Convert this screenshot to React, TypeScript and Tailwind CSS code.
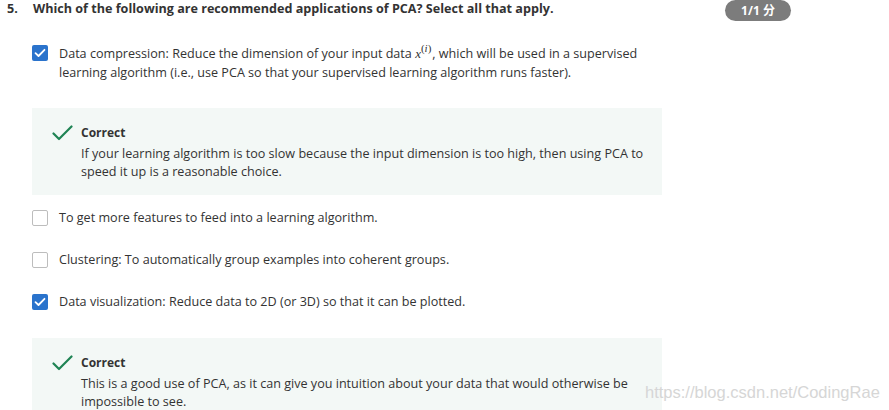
import React from "react";

const Checked = () => (
  <div className="w-[16px] h-[16px] rounded-[2px] bg-[#2a73cc] flex items-center justify-center shrink-0">
    <svg width="12" height="10" viewBox="0 0 12 10" fill="none">
      <path d="M1.5 5.2 L4.5 8 L10.5 1.8" stroke="white" strokeWidth="1.8" strokeLinecap="round" strokeLinejoin="round" />
    </svg>
  </div>
);

const Unchecked = () => (
  <div className="w-[16px] h-[16px] rounded-[2px] border border-[#bdbdbd] bg-white shrink-0" />
);

const Feedback = ({ children }: { children: React.ReactNode }) => (
  <div className="bg-[#f3f8f6] w-[630px] pl-[20px] pt-[16px] pb-[15px] flex">
    <svg width="21" height="16" viewBox="0 0 21 16" fill="none" className="mt-[1px] shrink-0">
      <path d="M1.5 8.5 L7 14 L19.5 1.5" stroke="#1f8354" strokeWidth="2.2" strokeLinecap="round" strokeLinejoin="round" />
    </svg>
    <div className="ml-[8px]">
      <div className="font-bold text-[12px] leading-[18px] text-[#333]">Correct</div>
      <div className="text-[12.6px] leading-[17.5px] text-[#333] mt-[3px] whitespace-nowrap">{children}</div>
    </div>
  </div>
);

export default function App() {
  return (
    <div
      className="relative w-[889px] h-[410px] bg-white overflow-hidden text-[#333]"
      style={{ fontFamily: '"Open Sans", "Noto Sans CJK SC", sans-serif' }}
    >
      <div className="flex items-start">
        <div className="flex items-center pl-[7px] pt-[0px] h-[19px] font-bold text-[12.6px]">
          <span className="w-[26px]">5.</span>
          <span>Which of the following are recommended applications of PCA? Select all that apply.</span>
        </div>
        <div className="ml-auto mr-[98px] mt-[0px] h-[21px] w-[66px] rounded-full bg-[#7c7c7c] text-white font-bold text-[12px] flex items-center justify-center">
          1/1 分
        </div>
      </div>

      <div className="pl-[32px] mt-[24px]">
        <div className="flex">
          <Checked />
          <div className="ml-[11px] text-[12.6px] leading-[19px] -mt-[1px] w-[600px]">
            Data compression: Reduce the dimension of your input data{" "}
            <span style={{ fontFamily: '"Liberation Serif", serif' }} className="italic text-[13px]">x</span>
            <span
              className="relative -top-[6px] text-[11px] leading-[0] mr-[1px]"
              style={{ fontFamily: '"Liberation Serif", serif' }}
            >
              (<i>i</i>)
            </span>
            , which will be used in a supervised learning algorithm (i.e., use PCA so that your supervised learning algorithm runs faster).
          </div>
        </div>

        <div className="mt-[26px]">
          <Feedback>
            If your learning algorithm is too slow because the input dimension is too high, then using PCA to
            <br />
            speed it up is a reasonable choice.
          </Feedback>
        </div>

        <div className="flex items-center mt-[15px] h-[16px]">
          <Unchecked />
          <span className="ml-[11px] text-[12.6px]">To get more features to feed into a learning algorithm.</span>
        </div>
        <div className="flex items-center mt-[26px] h-[16px]">
          <Unchecked />
          <span className="ml-[11px] text-[12.6px]">Clustering: To automatically group examples into coherent groups.</span>
        </div>
        <div className="flex items-center mt-[26px] h-[16px]">
          <Checked />
          <span className="ml-[11px] text-[12.6px]">Data visualization: Reduce data to 2D (or 3D) so that it can be plotted.</span>
        </div>

        <div className="mt-[28px]">
          <Feedback>
            This is a good use of PCA, as it can give you intuition about your data that would otherwise be
            <br />
            impossible to see.
          </Feedback>
        </div>
      </div>

      <div
        className="absolute left-[645px] top-[380px] text-[16.5px] text-[#d6d6d6]"
        style={{ fontFamily: '"Liberation Sans", Arial, sans-serif' }}
      >
        https://blog.csdn.net/CodingRae
      </div>
    </div>
  );
}
